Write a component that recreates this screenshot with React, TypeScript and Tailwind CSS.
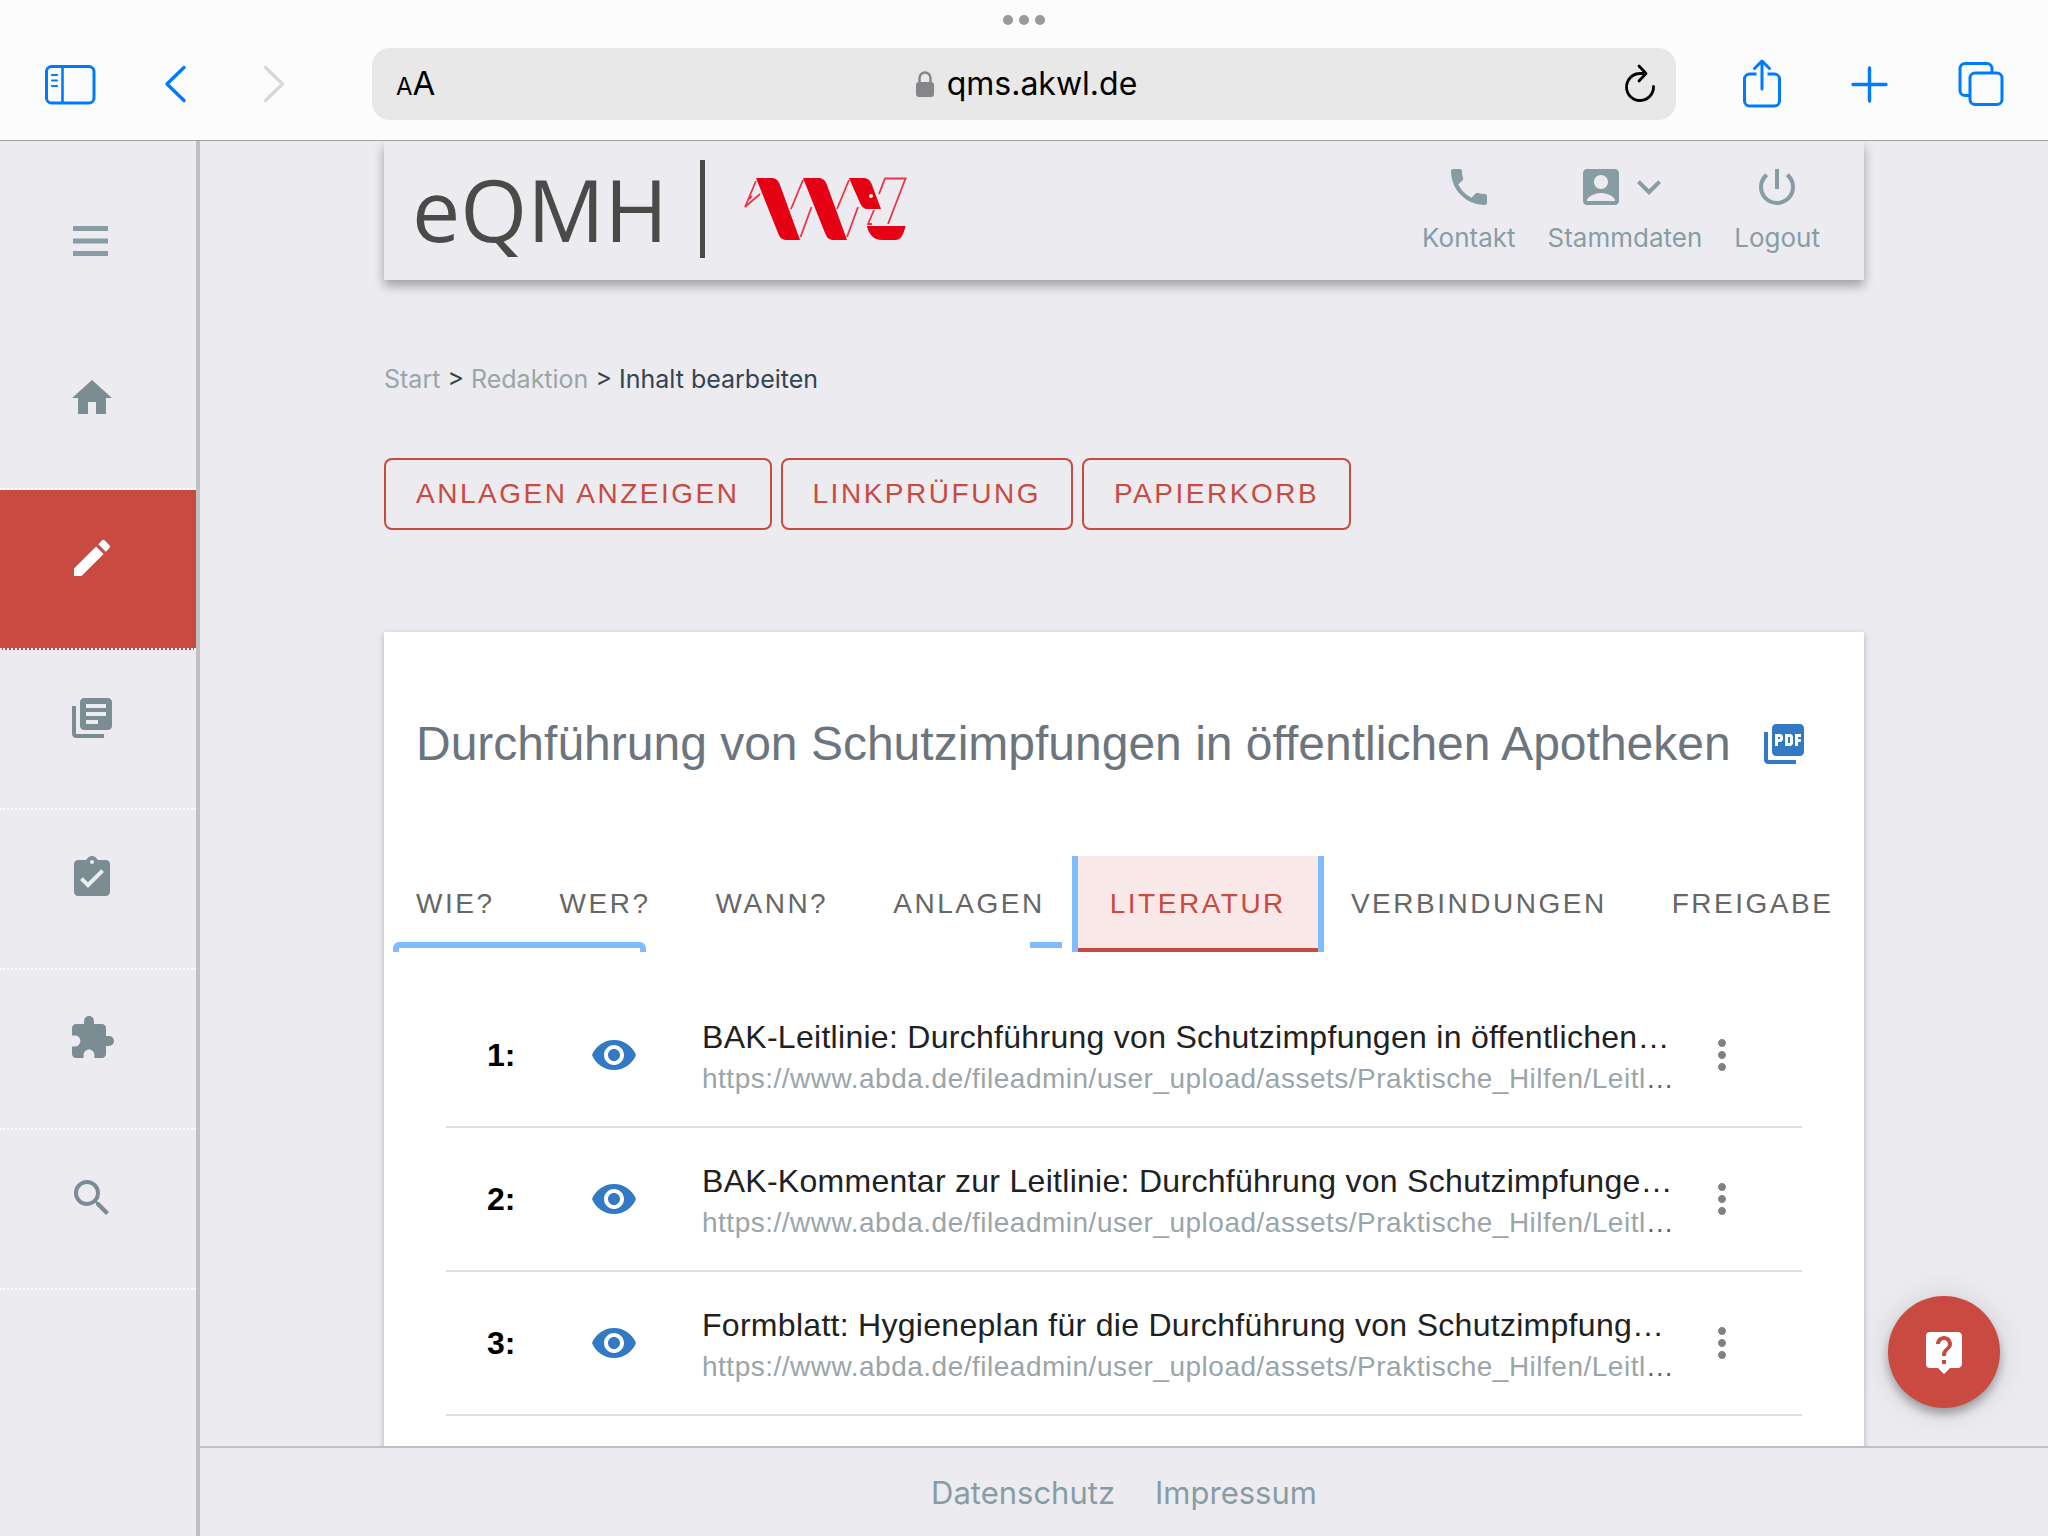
import * as React from 'react';
import clsx from 'clsx';
import {
    MdAccountBox,
    MdAssignmentTurnedIn,
    MdCreate,
    MdExpandMore,
    MdExtension,
    MdHome,
    MdLibraryBooks,
    MdLiveHelp,
    MdMoreVert,
    MdPhone,
    MdPictureAsPdf,
    MdPowerSettingsNew,
    MdSearch,
    MdVisibility,
} from 'react-icons/md';

const navItems = [
    { label: 'Startseite', icon: MdHome, active: false },
    { label: 'Redaktion', icon: MdCreate, active: true },
    { label: 'Dokumente', icon: MdLibraryBooks, active: false },
    { label: 'Aufgaben', icon: MdAssignmentTurnedIn, active: false },
    { label: 'Module', icon: MdExtension, active: false },
    { label: 'Suche', icon: MdSearch, active: false },
];

const actions = ['Anlagen anzeigen', 'Linkprüfung', 'Papierkorb'];

const tabs = ['Wie?', 'Wer?', 'Wann?', 'Anlagen', 'Literatur', 'Verbindungen', 'Freigabe'];

const url = 'https://www.abda.de/fileadmin/user_upload/assets/Praktische_Hilfen/Leitl';

const entries = [
    { id: 1, title: 'BAK-Leitlinie: Durchführung von Schutzimpfungen in öffentlichen…', url },
    { id: 2, title: 'BAK-Kommentar zur Leitlinie: Durchführung von Schutzimpfunge…', url },
    { id: 3, title: 'Formblatt: Hygieneplan für die Durchführung von Schutzimpfung…', url },
];

function ChromeButton({ label, className, children }: { label: string; className?: string; children: React.ReactNode }) {
    return (
        <button type="button" aria-label={label} className={clsx('shrink-0', className ?? 'text-[#007aff]')}>
            <svg
                width="52"
                height="52"
                viewBox="0 0 52 52"
                fill="none"
                stroke="currentColor"
                strokeWidth="3"
                strokeLinecap="round"
                strokeLinejoin="round"
            >
                {children}
            </svg>
        </button>
    );
}

function BrowserBar() {
    return (
        <header className="shrink-0 border-b border-[#a3a3a6] bg-[#fcfcfd]">
            <div className="flex h-12 justify-center gap-[6px] pt-[15px]">
                <span className="size-[10px] rounded-full bg-[#999]" />
                <span className="size-[10px] rounded-full bg-[#999]" />
                <span className="size-[10px] rounded-full bg-[#999]" />
            </div>
            <div className="grid grid-cols-[372px_1fr_372px] items-center pb-5">
                <div className="flex gap-[50px] pl-11">
                    <ChromeButton label="Seitenleiste">
                        <rect x="2.5" y="8.5" width="47.5" height="36.5" rx="5" />
                        <path d="M18.5 8.5v36" strokeWidth="2.6" />
                        <path d="M8 17h5M8 22.5h5M8 28h5" strokeWidth="2.2" />
                    </ChromeButton>
                    <ChromeButton label="Zurück">
                        <path d="M38 9.5L21 26l17 16.5" strokeWidth="3.4" />
                    </ChromeButton>
                    <ChromeButton label="Vorwärts" className="text-[#d8d8da]">
                        <path d="M17.5 9.5l17 16.5-17 16.5" strokeWidth="3.4" />
                    </ChromeButton>
                </div>

                <div className="flex h-[72px] items-center rounded-[18px] bg-[#e8e8e8] pr-3 pl-6">
                    <button type="button" aria-label="Darstellung" className="w-11 text-left font-['Inter',sans-serif] whitespace-nowrap text-black">
                        <span className="text-[24px]">A</span>
                        <span className="text-[33px]">A</span>
                    </button>
                    <div className="flex flex-1 items-center justify-center gap-3">
                        <svg width="20" height="28" viewBox="0 0 20 28" fill="none">
                            <path d="M4.5 13V8a5.5 5.5 0 0 1 11 0v5" stroke="#85858a" strokeWidth="2.4" />
                            <rect x="1" y="12" width="18" height="15" rx="3" fill="#85858a" />
                        </svg>
                        <span className="font-['Inter',sans-serif] text-[32px] text-black">qms.akwl.de</span>
                    </div>
                    <ChromeButton label="Neu laden" className="text-black">
                        <path d="M33 15.5h-5a13.5 13.5 0 1 0 13.5 13" strokeWidth="2.8" />
                        <path d="M27 8l7 7.5-7 7.5" strokeWidth="2.8" />
                    </ChromeButton>
                </div>

                <div className="flex justify-end gap-[57px] pr-[42px]">
                    <ChromeButton label="Teilen">
                        <path d="M20.5 16h-7a5 5 0 0 0-5 5v22a5 5 0 0 0 5 5h25a5 5 0 0 0 5-5V21a5 5 0 0 0-5-5h-7" strokeLinecap="butt" />
                        <path d="M26 31V3M18.5 10.5L26 3l7.5 7.5" />
                    </ChromeButton>
                    <ChromeButton label="Neuer Tab">
                        <path d="M24.5 10v33M8 26.5h33" strokeWidth="3.4" />
                    </ChromeButton>
                    <ChromeButton label="Tabs">
                        <path d="M15 37.5h-4a5 5 0 0 1-5-5v-22a5 5 0 0 1 5-5h22a5 5 0 0 1 5 5v4" strokeLinecap="butt" />
                        <rect x="16" y="15" width="32" height="31.5" rx="5" />
                    </ChromeButton>
                </div>
            </div>
        </header>
    );
}

function Sidebar() {
    return (
        <nav className="w-[200px] shrink-0 border-r-4 border-[#c0c0c0] text-[#7b8c93]">
            <button type="button" aria-label="Menü" className="flex h-[189px] w-full items-start pt-[85px] pl-[73px] text-[#889da3]">
                <svg width="35" height="30" viewBox="0 0 35 30" fill="currentColor">
                    <path d="M0 0h35v5H0zM0 12.5h35v5H0zM0 25h35v5H0z" />
                </svg>
            </button>
            {navItems.map(({ label, icon: Icon, active }) => (
                <a
                    key={label}
                    href="#"
                    aria-label={label}
                    className={clsx(
                        'block h-40 border-b-2 border-dotted border-white pt-11 pl-[68px]',
                        active && 'bg-[#c94a41] text-white'
                    )}
                >
                    <Icon size={48} />
                </a>
            ))}
        </nav>
    );
}

function Logo() {
    return (
        <div className="flex items-center text-[#4a4a49]">
            <span className="font-['Open_Sans',sans-serif] text-[86px] leading-[98px]">eQMH</span>
            <span className="ml-8 h-[98px] w-[5px] bg-[#4a4a49]" />
            <svg className="ml-[39px]" width="163" height="66" viewBox="0 -1 163 66" fill="#e60014">
                <path d="M12 1h15c5 0 7 2 9 7l20 55H43c-5 0-7-2-9-7z" />
                <path d="M59 1h15c5 0 7 2 9 7l20 55H90c-5 0-7-2-9-7z" />
                <path d="M105 1h14c5 0 7 2 9 7l9 24h-13c-4 0-6-2-8-6z" />
                <path d="M122.8 49h38.7c-2 9-5 14-10 14h-13c-8 0-13-4-15.7-14z" />
                <circle cx="127" cy="19" r="2" fill="#ecebf0" />
                <g fill="none" stroke="#ee3347" strokeWidth="1.8">
                    <path d="M12 4L1 30l15-13M5 22l3-3" />
                    <path d="M59 3L47 32M67.5 30l-11 30M105 3L93 32M114 30l-11 30" />
                    <path d="M135 17l6-15.5h20.5L144 47M130 33l-6 14h4" />
                </g>
            </svg>
        </div>
    );
}

function HeaderLink({ label, children }: { label: string; children: React.ReactNode }) {
    return (
        <a href="#" className="flex flex-col items-center gap-3 px-4">
            <span className="flex">{children}</span>
            <span className="font-['Inter',sans-serif] text-[26px] leading-[30px]">{label}</span>
        </a>
    );
}

function PageHeader() {
    return (
        <div className="flex h-[139px] items-start justify-between pt-[19px] pr-7 pl-7 shadow-[0_6px_10px_rgba(0,0,0,0.32)]">
            <Logo />
            <div className="flex pt-[3px] text-[#889da3]">
                <HeaderLink label="Kontakt">
                    <MdPhone size={48} />
                </HeaderLink>
                <HeaderLink label="Stammdaten">
                    <MdAccountBox size={48} />
                    <MdExpandMore size={48} />
                </HeaderLink>
                <HeaderLink label="Logout">
                    <MdPowerSettingsNew size={48} />
                </HeaderLink>
            </div>
        </div>
    );
}

function Tabs() {
    return (
        <div role="tablist" className="relative flex h-24 gap-px overflow-hidden">
            {/* focus rings cut off by the tab bar */}
            <span className="absolute top-[86px] left-[9px] h-6 w-[253px] rounded-t-md border-6 border-[#80bdff]" />
            <span className="absolute top-[86px] left-[646px] h-[6px] w-8 bg-[#80bdff]" />
            {tabs.map((tab) => {
                const active = tab === 'Literatur';
                return (
                    <button
                        key={tab}
                        type="button"
                        role="tab"
                        aria-selected={active}
                        className={clsx(
                            'px-8 text-[28px] tracking-[0.09em] uppercase',
                            active
                                ? 'border-y-4 border-t-transparent border-b-[#c94a41] bg-[#f8e8e7] text-[#c94a41] shadow-[0_0_0_6px_#80bdff]'
                                : 'text-[#666]'
                        )}
                    >
                        {tab}
                    </button>
                );
            })}
        </div>
    );
}

function Entry({ entry }: { entry: (typeof entries)[number] }) {
    return (
        <li className="flex h-36 items-center border-b-2 border-[#e0e0e0] pr-14">
            <span className="w-36 pl-[41px] text-[32px] font-bold text-black">{entry.id}:</span>
            <button type="button" aria-label="Ansehen" className="text-[#3479c4]">
                <MdVisibility size={48} />
            </button>
            <div className="ml-16 flex min-w-0 flex-1 flex-col gap-[2px] pt-[6px]">
                <p className="truncate text-[32px] leading-10 tracking-[0.009em] text-[#212121]">{entry.title}</p>
                <p className="truncate text-[28px] leading-10 tracking-[0.018em] text-[#666]">
                    <a href="#" className="text-[#9aa5a9]">{entry.url}</a>…
                </p>
            </div>
            <button type="button" aria-label="Mehr" className="ml-6 text-[#808080]">
                <MdMoreVert size={48} />
            </button>
        </li>
    );
}

export default function App() {
    return (
        <div className="flex h-screen flex-col overflow-hidden bg-[#ecebf0] font-['Liberation_Sans',Arial,sans-serif]">
            <BrowserBar />
            <div className="flex min-h-0 flex-1">
                <Sidebar />
                <div className="flex min-w-0 flex-1 flex-col">
                    <main className="min-h-0 flex-1 overflow-hidden px-[184px]">
                        <PageHeader />

                        <div className="mt-[79px] font-['Inter',sans-serif] text-[25px] leading-10 text-[#34444f]">
                            <a href="#" className="text-[#9aa5a9]">Start</a>
                            {' > '}
                            <a href="#" className="text-[#9aa5a9]">Redaktion</a>
                            {' > '}
                            <span>Inhalt bearbeiten</span>
                        </div>

                        <div className="mt-[59px] flex gap-[9px]">
                            {actions.map((action) => (
                                <button
                                    key={action}
                                    type="button"
                                    className="h-[72px] rounded-lg border-2 border-[#c94a41] px-[30px] text-[28px] tracking-[0.09em] text-[#c94a41] uppercase"
                                >
                                    {action}
                                </button>
                            ))}
                        </div>

                        <section className="mt-[102px] bg-white pb-24 shadow-[0_2px_6px_rgba(0,0,0,0.25)]">
                            <div className="flex items-center gap-[29px] px-8 pt-20">
                                <h1 className="text-[48px] leading-[64px] text-[#6c757d]">
                                    Durchführung von Schutzimpfungen in öffentlichen Apotheken
                                </h1>
                                <button type="button" aria-label="PDF" className="text-[#3479c4]">
                                    <MdPictureAsPdf size={48} />
                                </button>
                            </div>
                            <div className="pt-20">
                                <Tabs />
                            </div>
                            <ul className="mx-[62px] pt-8">
                                {entries.map((entry) => (
                                    <Entry key={entry.id} entry={entry} />
                                ))}
                            </ul>
                        </section>
                    </main>

                    <footer className="flex h-[90px] shrink-0 items-center justify-center gap-10 border-t-2 border-[#c0c0c0] pt-[2px] font-['Inter',sans-serif] text-[31px] text-[#889da3]">
                        <a href="#">Datenschutz</a>
                        <a href="#">Impressum</a>
                    </footer>
                </div>
            </div>

            <button
                type="button"
                aria-label="Hilfe"
                className="fixed right-12 bottom-32 flex size-28 items-center justify-center rounded-full bg-[#c94a41] text-white shadow-[0_6px_10px_rgba(0,0,0,0.3),0_2px_36px_rgba(0,0,0,0.12)]"
            >
                <MdLiveHelp size={48} />
            </button>
        </div>
    );
}
